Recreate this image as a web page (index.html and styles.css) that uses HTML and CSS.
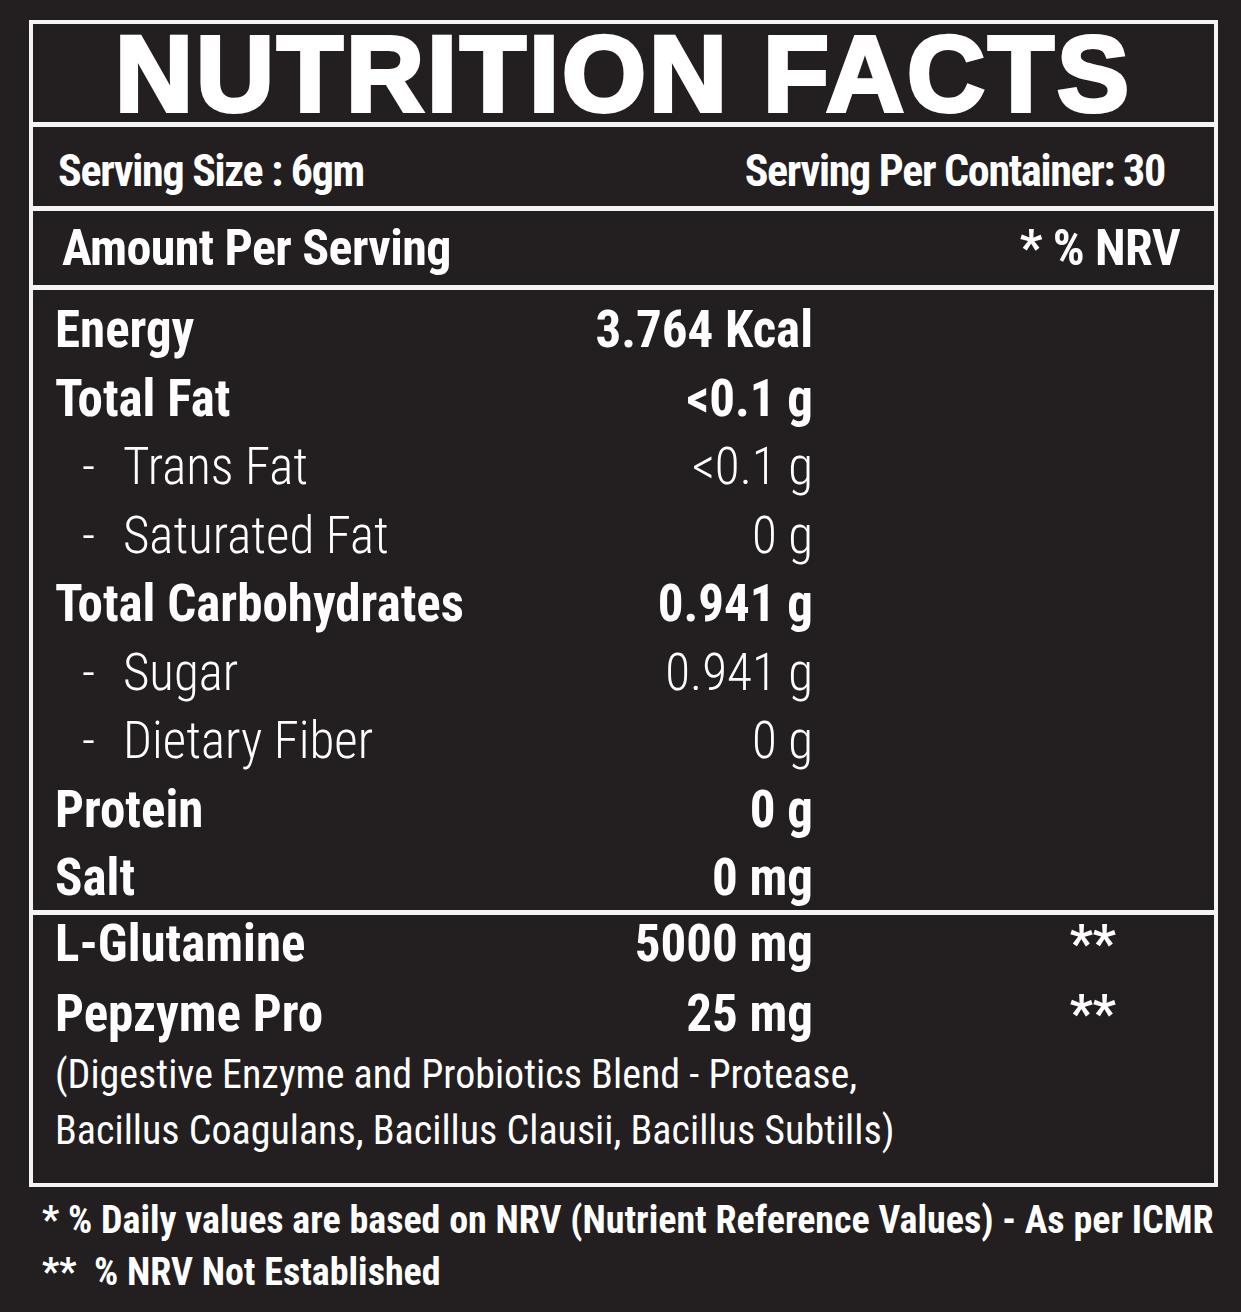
FILE: index.html
```html
<!DOCTYPE html>
<html lang="en">
<head>
<meta charset="utf-8">
<title>Nutrition Facts</title>
<link rel="stylesheet" href="styles.css">
</head>
<body>
<div class="page">
  <div class="box">
    <h1 class="title">NUTRITION FACTS</h1>
    <div class="serving">
      <span>Serving Size : 6gm</span>
      <span>Serving Per Container: 30</span>
    </div>
    <div class="amount">
      <span>Amount Per Serving</span>
      <span>* % NRV</span>
    </div>
    <div class="nutrients">
      <div class="row"><span class="name">Energy</span><span class="val">3.764 Kcal</span><span class="nrv"></span></div>
      <div class="row"><span class="name">Total Fat</span><span class="val">&lt;0.1 g</span><span class="nrv"></span></div>
      <div class="row sub"><span class="name"><span class="dash">-</span>Trans Fat</span><span class="val">&lt;0.1 g</span><span class="nrv"></span></div>
      <div class="row sub"><span class="name"><span class="dash">-</span>Saturated Fat</span><span class="val">0 g</span><span class="nrv"></span></div>
      <div class="row"><span class="name">Total Carbohydrates</span><span class="val">0.941 g</span><span class="nrv"></span></div>
      <div class="row sub"><span class="name"><span class="dash">-</span>Sugar</span><span class="val">0.941 g</span><span class="nrv"></span></div>
      <div class="row sub"><span class="name"><span class="dash">-</span>Dietary Fiber</span><span class="val">0 g</span><span class="nrv"></span></div>
      <div class="row"><span class="name">Protein</span><span class="val">0 g</span><span class="nrv"></span></div>
      <div class="row"><span class="name">Salt</span><span class="val">0 mg</span><span class="nrv"></span></div>
    </div>
    <div class="extras">
      <div class="row"><span class="name">L-Glutamine</span><span class="val">5000 mg</span><span class="nrv">**</span></div>
      <div class="row"><span class="name">Pepzyme Pro</span><span class="val">25 mg</span><span class="nrv">**</span></div>
      <p class="desc">(Digestive Enzyme and Probiotics Blend - Protease,<br>Bacillus Coagulans, Bacillus Clausii, Bacillus Subtills)</p>
    </div>
  </div>
  <div class="notes">
    <p>* % Daily values are based on NRV (Nutrient Reference Values) - As per ICMR</p>
    <p>**&nbsp;&nbsp;% NRV Not Established</p>
  </div>
</div>
</body>
</html>
```
FILE: styles.css
```css
html, body {
  margin: 0;
  padding: 0;
  background: #231f20;
  color: #ffffff;
}

body {
  font-family: "Roboto Condensed", "Roboto", sans-serif;
  font-stretch: condensed;
  font-weight: 700;
}

.page {
  padding: 20px 0 0 29px;
}

.box {
  width: 1189px;
  box-sizing: border-box;
  border: 4px solid #f4f4f4;
}

.title {
  margin: 0;
  height: 98px;
  box-sizing: border-box;
  padding-top: 2px;
  line-height: 96px;
  text-align: center;
  font-family: "Liberation Sans", Arial, sans-serif;
  font-stretch: normal;
  font-weight: 900;
  font-size: 108px;
  letter-spacing: 3px;
  -webkit-text-stroke: 4px #ffffff;
}

.serving {
  border-top: 5px solid #f4f4f4;
  height: 84px;
  box-sizing: border-box;
  padding: 8px 49px 0 25px;
  display: flex;
  justify-content: space-between;
  align-items: center;
  font-size: 44px;
  letter-spacing: -1.3px;
}

.amount {
  border-top: 5px solid #f4f4f4;
  height: 79px;
  box-sizing: border-box;
  padding: 0 34px 0 29px;
  display: flex;
  justify-content: space-between;
  align-items: center;
  font-size: 50px;
  letter-spacing: -0.6px;
}

.nutrients {
  border-top: 5px solid #f4f4f4;
  height: 625px;
  box-sizing: border-box;
  padding-top: 6px;
}

.row {
  display: grid;
  grid-template-columns: 520px 238px 1fr;
  height: 68.5px;
  line-height: 68.5px;
  padding-left: 22px;
  font-size: 51px;
  white-space: nowrap;
}

.val {
  text-align: right;
}

.nrv {
  text-align: right;
  padding-right: 98px;
}

.sub {
  font-weight: 300;
}

.dash {
  display: inline-block;
  width: 41px;
  padding-left: 27px;
}

.extras {
  border-top: 5px solid #f4f4f4;
  padding-bottom: 24px;
  display: flex;
  flex-direction: column;
  gap: 11.5px;
}

.extras .row {
  height: 58px;
  line-height: 58px;
}

.desc {
  margin: -7px 0 0;
  padding-left: 22px;
  font-size: 40px;
  font-weight: 400;
  line-height: 56px;
}

.notes {
  padding: 7px 0 0 13px;
}

.notes p {
  margin: 0;
  font-size: 38px;
  line-height: 52px;
  white-space: nowrap;
}
```
